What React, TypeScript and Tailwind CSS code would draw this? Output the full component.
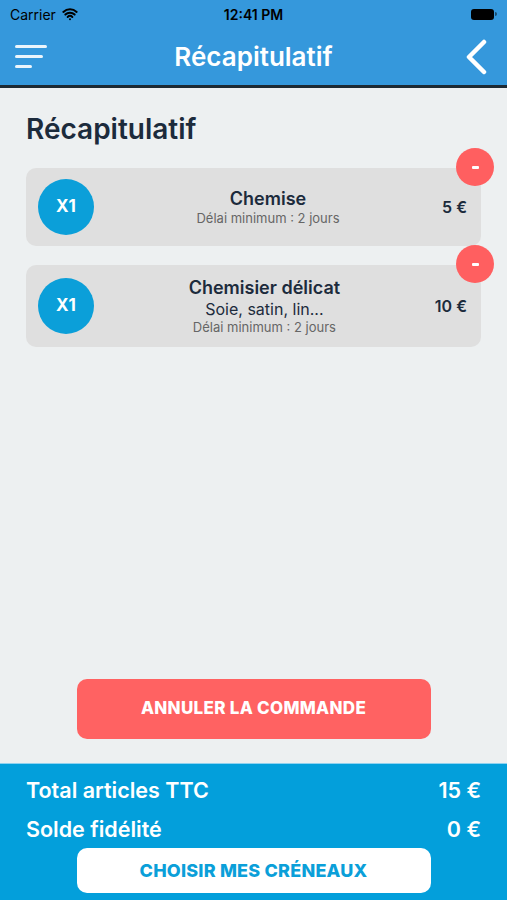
import { Wifi } from 'lucide-react'

type Item = {
  id: string
  qty: number
  name: string
  detail?: string
  delay: string
  price: string
}

const items: Item[] = [
  { id: 'chemise', qty: 1, name: 'Chemise', delay: 'Délai minimum : 2 jours', price: '5 €' },
  {
    id: 'chemisier',
    qty: 1,
    name: 'Chemisier délicat',
    detail: 'Soie, satin, lin...',
    delay: 'Délai minimum : 2 jours',
    price: '10 €',
  },
]

export default function App() {
  return (
    <div
      className="flex h-[900px] w-[507px] flex-col overflow-hidden bg-[#edf0f1]"
      style={{ fontFamily: 'Inter, "Noto Sans", sans-serif' }}
    >
      {/* Status bar + nav */}
      <div className="bg-[#3598dc] border-b-[3px] border-[#1d2a33]">
        <div className="relative flex h-[28px] items-center px-[10px] text-[14px] text-black">
          <span>Carrier</span>
          <Wifi className="ml-[6px] h-[16px] w-[16px]" strokeWidth={3} />
          <span className="absolute left-1/2 -translate-x-1/2 font-semibold">12:41 PM</span>
          <div className="ml-auto flex items-center">
            <div className="h-[11px] w-[23px] rounded-[3px] bg-black" />
            <div className="ml-[1px] h-[4px] w-[2px] rounded-r-sm bg-black/50" />
          </div>
        </div>
        <div className="relative flex h-[57px] items-center justify-between pl-[15px] pr-[20px]">
          <div className="flex flex-col gap-[7.5px]">
            <div className="h-[2.5px] w-[32px] rounded-full bg-white/90" />
            <div className="h-[2.5px] w-[28px] rounded-full bg-white/90" />
            <div className="h-[2.5px] w-[17px] rounded-full bg-white/90" />
          </div>
          <h1 className="absolute left-1/2 -translate-x-1/2 text-[26px] font-semibold text-white">
            Récapitulatif
          </h1>
          <svg width="22" height="36" viewBox="0 0 22 36" fill="none">
            <path d="M19 3 L4 18 L19 33" stroke="white" strokeWidth="4.5" strokeLinecap="round" strokeLinejoin="round" />
          </svg>
        </div>
      </div>

      {/* Content */}
      <div className="flex flex-1 flex-col px-[26px] pt-[25px]">
        <h2 className="text-[28px] font-semibold leading-[32px] text-[#1c2b3c]">Récapitulatif</h2>

        <div className="mt-[23px] flex flex-col gap-[19px]">
          {items.map((item) => (
            <div
              key={item.id}
              className={`relative flex items-center rounded-[10px] bg-[#dfdfdf] pl-[12px] pr-[14px] ${
                item.detail ? 'h-[82px]' : 'h-[78px]'
              }`}
            >
              <div className="flex h-[56px] w-[56px] shrink-0 items-center justify-center rounded-full bg-[#0b9fd9] text-[17px] font-bold text-white">
                X{item.qty}
              </div>
              <div className="flex flex-1 flex-col items-center text-center">
                <div className="text-[18px] font-semibold leading-[22px] text-[#1c2b3c]">{item.name}</div>
                {item.detail && (
                  <div className="text-[16px] leading-[20px] text-[#1c2b3c]">{item.detail}</div>
                )}
                <div className="text-[13px] leading-[17px] text-[#666]">{item.delay}</div>
              </div>
              <div className="text-[16px] font-semibold text-[#1c2b3c]">{item.price}</div>
              <div className="absolute right-[-13px] top-[-20px] flex h-[38px] w-[38px] items-center justify-center rounded-full bg-[#ff5f60]">
                <div className="h-[3px] w-[7px] rounded-[1px] bg-white" />
              </div>
            </div>
          ))}
        </div>

        <button className="mx-auto mb-[24px] mt-auto flex h-[60px] w-[354px] items-center justify-center rounded-[10px] bg-[#ff6262] text-[17px] font-extrabold tracking-[0.3px] text-white">
          ANNULER LA COMMANDE
        </button>
      </div>

      {/* Footer */}
      <div className="flex h-[137px] flex-col border-t border-[#8fd2f0] bg-[#039fdb] px-[26px] pt-[12px] text-white">
        <div className="flex h-[28px] items-center justify-between text-[21.5px] font-semibold">
          <span>Total articles TTC</span>
          <span>15 €</span>
        </div>
        <div className="mt-[11px] flex h-[28px] items-center justify-between text-[21.5px] font-semibold">
          <span>Solde fidélité</span>
          <span>0 €</span>
        </div>
        <button className="mx-auto mt-[5px] flex h-[45px] w-[354px] items-center justify-center rounded-[10px] bg-white text-[18px] font-extrabold tracking-[0.2px] text-[#0b9fd9]">
          CHOISIR MES CRÉNEAUX
        </button>
      </div>
    </div>
  )
}
